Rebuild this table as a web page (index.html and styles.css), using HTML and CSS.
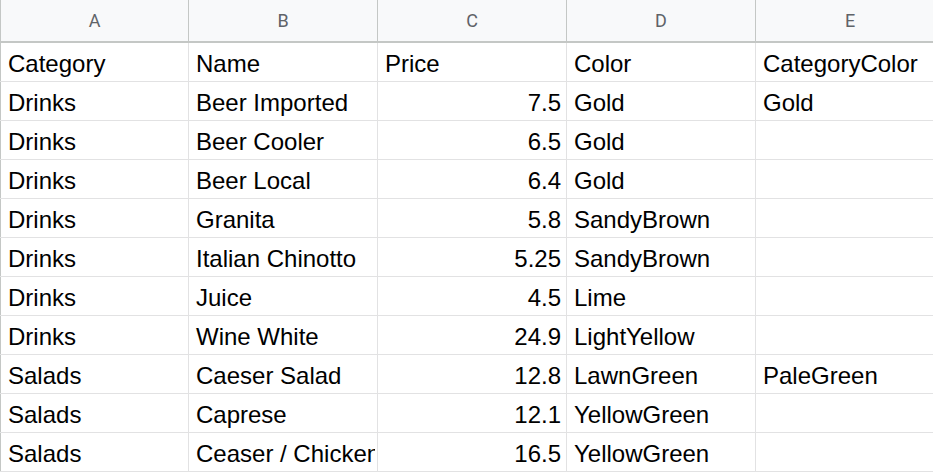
FILE: index.html
```html
<!DOCTYPE html>
<html>
<head>
<meta charset="utf-8">
<link rel="stylesheet" href="styles.css">
</head>
<body>
<div class="sheet">
  <div class="row head">
    <div class="cell">A</div><div class="cell">B</div><div class="cell">C</div><div class="cell">D</div><div class="cell">E</div>
  </div>
  <div class="row"><div class="cell">Category</div><div class="cell">Name</div><div class="cell">Price</div><div class="cell">Color</div><div class="cell">CategoryColor</div></div>
  <div class="row"><div class="cell">Drinks</div><div class="cell">Beer Imported</div><div class="cell num">7.5</div><div class="cell">Gold</div><div class="cell">Gold</div></div>
  <div class="row"><div class="cell">Drinks</div><div class="cell">Beer Cooler</div><div class="cell num">6.5</div><div class="cell">Gold</div><div class="cell"></div></div>
  <div class="row"><div class="cell">Drinks</div><div class="cell">Beer Local</div><div class="cell num">6.4</div><div class="cell">Gold</div><div class="cell"></div></div>
  <div class="row"><div class="cell">Drinks</div><div class="cell">Granita</div><div class="cell num">5.8</div><div class="cell">SandyBrown</div><div class="cell"></div></div>
  <div class="row"><div class="cell">Drinks</div><div class="cell">Italian Chinotto</div><div class="cell num">5.25</div><div class="cell">SandyBrown</div><div class="cell"></div></div>
  <div class="row"><div class="cell">Drinks</div><div class="cell">Juice</div><div class="cell num">4.5</div><div class="cell">Lime</div><div class="cell"></div></div>
  <div class="row"><div class="cell">Drinks</div><div class="cell">Wine White</div><div class="cell num">24.9</div><div class="cell">LightYellow</div><div class="cell"></div></div>
  <div class="row"><div class="cell">Salads</div><div class="cell">Caeser Salad</div><div class="cell num">12.8</div><div class="cell">LawnGreen</div><div class="cell">PaleGreen</div></div>
  <div class="row"><div class="cell">Salads</div><div class="cell">Caprese</div><div class="cell num">12.1</div><div class="cell">YellowGreen</div><div class="cell"></div></div>
  <div class="row"><div class="cell">Salads</div><div class="cell"><span class="clip">Ceaser / Chicken</span></div><div class="cell num">16.5</div><div class="cell">YellowGreen</div><div class="cell"></div></div>
</div>
</body>
</html>
```

FILE: styles.css
```css
html, body {
  margin: 0;
  padding: 0;
  background: #ffffff;
  overflow: hidden;
}
.sheet {
  width: 945px;
  font-family: "Liberation Sans", Arial, sans-serif;
  color: #000000;
}
.row {
  display: grid;
  grid-template-columns: repeat(5, 189px);
  height: 39px;
  box-sizing: border-box;
  border-bottom: 1px solid #e2e2e3;
}
.cell {
  box-sizing: border-box;
  border-right: 1px solid #e2e2e3;
  padding: 4px 5px 0 7px;
  font-size: 24px;
  line-height: 34px;
  white-space: nowrap;
  overflow: hidden;
}
.cell:first-child {
  border-left: 1px solid #c4c7c5;
  padding-left: 7px;
}
.clip {
  display: block;
  width: 179px;
  overflow: hidden;
}
.num {
  text-align: right;
}
.head {
  height: 43px;
  background: #f8f9fa;
  border-bottom: 2px solid #c4c7c5;
}
.head .cell {
  border-right-color: #c4c7c5;
  text-align: center;
  font-family: Roboto, "Liberation Sans", Arial, sans-serif;
  font-size: 18px;
  line-height: 41px;
  color: #5f6368;
  padding: 0;
}
```
